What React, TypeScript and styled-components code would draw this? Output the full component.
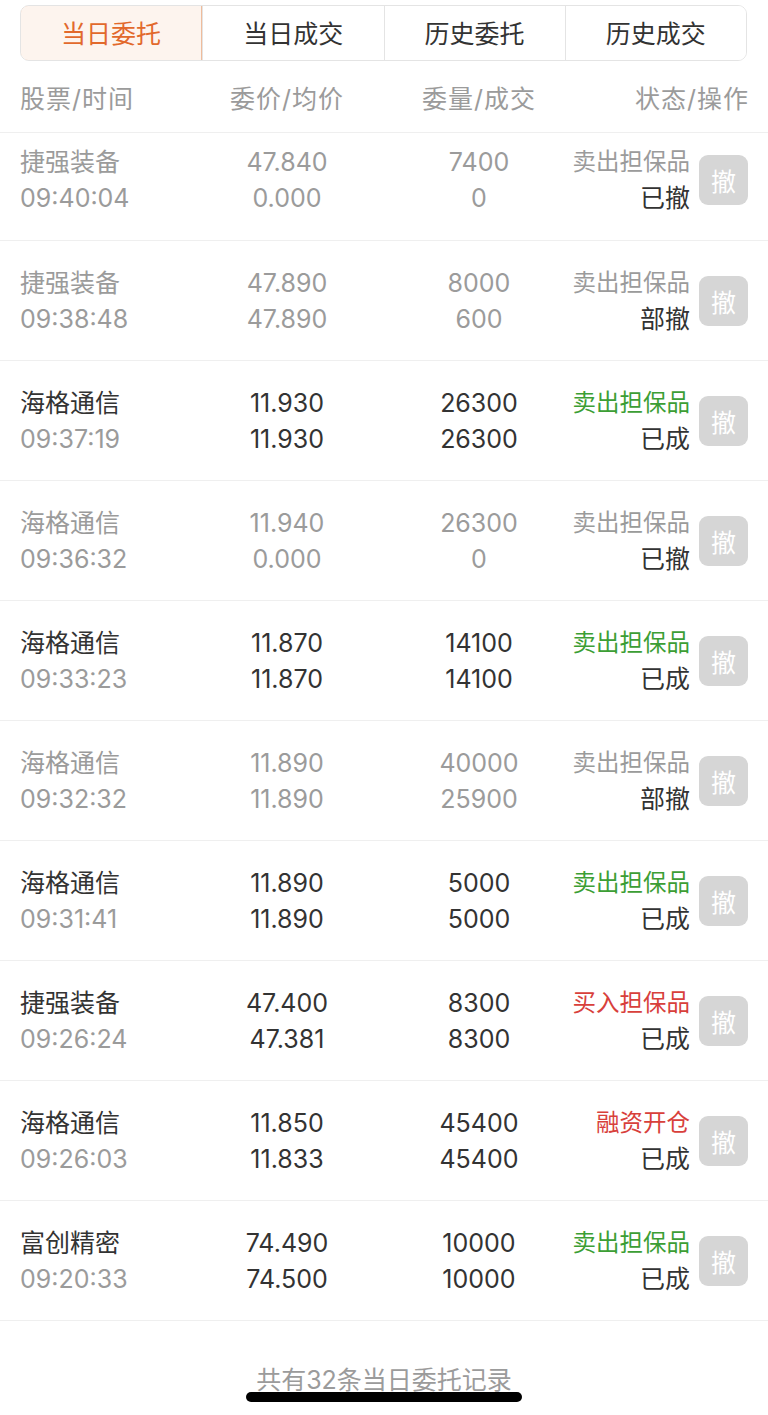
import React from "react";
import styled, { createGlobalStyle } from "styled-components";

const GlobalStyle = createGlobalStyle`
  html, body {
    margin: 0;
    padding: 0;
    background: #ffffff;
  }
  body {
    font-family: "Inter", "Noto Sans CJK SC", "Noto Sans", sans-serif;
    -webkit-font-smoothing: antialiased;
  }
  * { box-sizing: border-box; }
`;

const Page = styled.div`
  position: relative;
  width: 768px;
  min-height: 1415px;
  background: #fff;
  overflow: hidden;
`;

const TabBar = styled.div`
  margin: 5px 21px 0 20px;
  height: 56px;
  display: grid;
  grid-template-columns: repeat(4, 1fr);
  border: 1px solid #e4e4e4;
  border-radius: 9px;
  overflow: hidden;
`;

const Tab = styled.div<{ $active?: boolean }>`
  display: flex;
  align-items: center;
  justify-content: center;
  padding-bottom: 2px;
  font-size: 25px;
  color: ${(p) => (p.$active ? "#e2692c" : "#333")};
  background: ${(p) => (p.$active ? "#fdf4ee" : "#fff")};
  border: ${(p) => (p.$active ? "1px solid #efbc9c" : "none")};
  border-left: ${(p) => (p.$active ? "1px solid #efbc9c" : "1px solid #e4e4e4")};
  border-radius: ${(p) => (p.$active ? "8px 0 0 8px" : "0")};
  margin: ${(p) => (p.$active ? "-1px 0 -1px -1px" : "0")};
  &:first-child { border-left: ${(p) => (p.$active ? "1px solid #efbc9c" : "none")}; }
`;

const Grid = styled.div`
  display: grid;
  grid-template-columns: 170px 194px 190px minmax(0, 1fr);
  padding: 0 20px;
  align-items: center;
`;

const HeaderRow = styled(Grid)`
  height: 72px;
  border-bottom: 1px solid #efefef;
  color: #9b9b9b;
  font-size: 25px;
  letter-spacing: 1px;
`;

const HeadCell = styled.div<{ $align: "left" | "center" | "right" }>`
  text-align: ${(p) => p.$align};
  white-space: nowrap;
  margin-right: ${(p) => (p.$align === "right" ? "-1px" : "0")};
`;

const Row = styled(Grid)<{ $clipped?: boolean }>`
  height: ${(p) => (p.$clipped ? "108px" : "120px")};
  padding-bottom: ${(p) => (p.$clipped ? "13px" : "0")};
  border-bottom: 1px solid #efefef;
`;

const Cell = styled.div<{ $align: "left" | "center" }>`
  display: flex;
  flex-direction: column;
  align-items: ${(p) => (p.$align === "left" ? "flex-start" : "center")};
`;

const Line = styled.div<{ $tone: "dark" | "gray" }>`
  font-size: 25px;
  line-height: 36px;
  color: ${(p) => (p.$tone === "dark" ? "#333333" : "#9b9b9b")};
  white-space: nowrap;
`;

const StatusCell = styled.div`
  display: flex;
  align-items: center;
  justify-content: flex-end;
  gap: 9px;
  min-width: 0;
`;

const StatusText = styled.div`
  display: flex;
  flex-direction: column;
  align-items: flex-end;
  flex-shrink: 0;
`;

const StatusLabel = styled.div<{ $color: string }>`
  font-size: 23.5px;
  line-height: 36px;
  color: ${(p) => p.$color};
  white-space: nowrap;
`;

const StatusState = styled.div`
  font-size: 25px;
  line-height: 36px;
  color: #333;
  white-space: nowrap;
`;

const CancelButton = styled.button`
  flex-shrink: 0;
  width: 49px;
  height: 50px;
  border: none;
  border-radius: 9px;
  background: #d6d6d6;
  color: #ffffff;
  font-family: "Noto Sans CJK SC", sans-serif;
  font-size: 25px;
  padding: 0;
  display: flex;
  align-items: center;
  justify-content: center;
`;

const Footer = styled.div`
  height: 95px;
  display: flex;
  justify-content: center;
  padding-top: 41px;
`;

const FooterText = styled.div`
  font-size: 25px;
  line-height: 36px;
  color: #9b9b9b;
  text-decoration: underline;
  text-decoration-color: #b5b5b5;
  text-underline-offset: 3px;
`;

const HomeIndicator = styled.div`
  position: absolute;
  left: 50%;
  bottom: 14px;
  width: 276px;
  height: 10px;
  margin-left: -138px;
  border-radius: 5px;
  background: #000;
`;

type Order = {
  name: string;
  time: string;
  price: string;
  avg: string;
  qty: string;
  done: string;
  label: string;
  labelColor: "gray" | "green" | "red";
  state: string;
  active: boolean;
};

const orders: Order[] = [
  { name: "捷强装备", time: "09:40:04", price: "47.840", avg: "0.000", qty: "7400", done: "0", label: "卖出担保品", labelColor: "gray", state: "已撤", active: false },
  { name: "捷强装备", time: "09:38:48", price: "47.890", avg: "47.890", qty: "8000", done: "600", label: "卖出担保品", labelColor: "gray", state: "部撤", active: false },
  { name: "海格通信", time: "09:37:19", price: "11.930", avg: "11.930", qty: "26300", done: "26300", label: "卖出担保品", labelColor: "green", state: "已成", active: true },
  { name: "海格通信", time: "09:36:32", price: "11.940", avg: "0.000", qty: "26300", done: "0", label: "卖出担保品", labelColor: "gray", state: "已撤", active: false },
  { name: "海格通信", time: "09:33:23", price: "11.870", avg: "11.870", qty: "14100", done: "14100", label: "卖出担保品", labelColor: "green", state: "已成", active: true },
  { name: "海格通信", time: "09:32:32", price: "11.890", avg: "11.890", qty: "40000", done: "25900", label: "卖出担保品", labelColor: "gray", state: "部撤", active: false },
  { name: "海格通信", time: "09:31:41", price: "11.890", avg: "11.890", qty: "5000", done: "5000", label: "卖出担保品", labelColor: "green", state: "已成", active: true },
  { name: "捷强装备", time: "09:26:24", price: "47.400", avg: "47.381", qty: "8300", done: "8300", label: "买入担保品", labelColor: "red", state: "已成", active: true },
  { name: "海格通信", time: "09:26:03", price: "11.850", avg: "11.833", qty: "45400", done: "45400", label: "融资开仓", labelColor: "red", state: "已成", active: true },
  { name: "富创精密", time: "09:20:33", price: "74.490", avg: "74.500", qty: "10000", done: "10000", label: "卖出担保品", labelColor: "green", state: "已成", active: true },
];

const labelColors = { gray: "#9b9b9b", green: "#3c9e34", red: "#d8403b" };

const tabs = ["当日委托", "当日成交", "历史委托", "历史成交"];

export default function App() {
  return (
    <Page>
      <GlobalStyle />
      <TabBar>
        {tabs.map((t, i) => (
          <Tab key={t} $active={i === 0}>
            {t}
          </Tab>
        ))}
      </TabBar>
      <HeaderRow>
        <HeadCell $align="left">股票/时间</HeadCell>
        <HeadCell $align="center">委价/均价</HeadCell>
        <HeadCell $align="center">委量/成交</HeadCell>
        <HeadCell $align="right">状态/操作</HeadCell>
      </HeaderRow>
      {orders.map((o, i) => {
        const tone = o.active ? "dark" : "gray";
        return (
          <Row key={i} $clipped={i === 0}>
            <Cell $align="left">
              <Line $tone={tone}>{o.name}</Line>
              <Line $tone="gray">{o.time}</Line>
            </Cell>
            <Cell $align="center">
              <Line $tone={tone}>{o.price}</Line>
              <Line $tone={tone}>{o.avg}</Line>
            </Cell>
            <Cell $align="center">
              <Line $tone={tone}>{o.qty}</Line>
              <Line $tone={tone}>{o.done}</Line>
            </Cell>
            <StatusCell>
              <StatusText>
                <StatusLabel $color={labelColors[o.labelColor]}>{o.label}</StatusLabel>
                <StatusState>{o.state}</StatusState>
              </StatusText>
              <CancelButton>撤</CancelButton>
            </StatusCell>
          </Row>
        );
      })}
      <Footer>
        <FooterText>共有32条当日委托记录</FooterText>
      </Footer>
      <HomeIndicator />
    </Page>
  );
}
